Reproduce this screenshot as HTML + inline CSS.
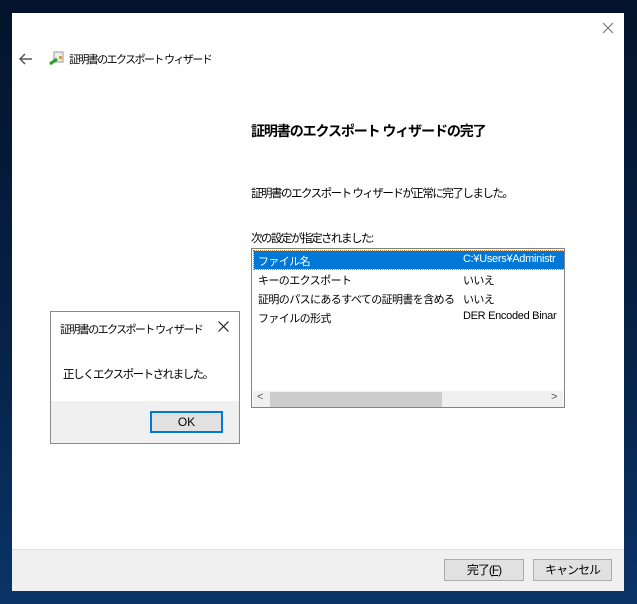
<!DOCTYPE html><html><head><meta charset="utf-8"><style>
body{margin:0;width:637px;height:604px;overflow:hidden;background:linear-gradient(180deg,#03132b 0%,#06234a 60%,#0a3468 100%);font-family:"Liberation Sans","Noto Sans CJK JP",sans-serif;font-size:11px;color:#000;position:relative}
.a{position:absolute;white-space:nowrap}
.t{letter-spacing:-1.5px}
.l{letter-spacing:-0.6px}
.win{left:12px;top:13px;width:612px;height:577px;background:#fff}
.foot{left:0;top:536px;width:612px;height:41px;background:#f0f0f0;border-top:1px solid #dfdfdf}
.btn{position:absolute;background:#e1e1e1;border:1px solid #adadad;text-align:center;line-height:20px;box-sizing:border-box;font-size:12px;letter-spacing:-1px}
</style></head><body>
<div class="a win">
<svg class="a" style="left:590px;top:9px" width="12" height="12"><path d="M1 1L11 11M11 1L1 11" stroke="#777" stroke-width="1.2"/></svg>
<svg class="a" style="left:7px;top:40px" width="14" height="12"><path d="M13 6H2M6 1L1 6L6 11" stroke="#555" stroke-width="1.5" fill="none"/></svg>
<svg class="a" style="left:36px;top:37px" width="16" height="16"><rect x="6" y="2" width="9" height="10" fill="#eee" stroke="#999"/><path d="M2 14L9 9" stroke="#2a9d2a" stroke-width="3"/><rect x="11" y="6" width="3" height="3" fill="#e8a000"/></svg>
<div class="a" style="left:57px;top:38px;font-size:11px;letter-spacing:-1.6px">証明書のエクスポート ウィザード</div>
<div class="a" style="left:239px;top:108px;font-size:14px;font-weight:bold;letter-spacing:-1.1px">証明書のエクスポート ウィザードの完了</div>
<div class="a t" style="left:239px;top:172px;font-size:11.5px">証明書のエクスポート ウィザードが正常に完了しました。</div>
<div class="a t" style="left:239px;top:217px;font-size:11.5px">次の設定が指定されました:</div>
<div class="a" style="left:239px;top:235px;width:314px;height:160px;border:1px solid #828282;box-sizing:border-box;overflow:hidden">
 <div class="a" style="left:2px;top:2px;width:310px;height:18px;background:#0078d7;outline:1px dotted #c08040"></div>
 <div class="a l" style="left:6px;top:4px;color:#fff">ファイル名</div><div class="a" style="left:211px;top:4px;color:#fff;letter-spacing:-0.3px">C:¥Users¥Administr</div>
 <div class="a l" style="left:6px;top:23px">キーのエクスポート</div><div class="a l" style="left:211px;top:23px">いいえ</div>
 <div class="a l" style="left:6px;top:42px">証明のパスにあるすべての証明書を含める</div><div class="a l" style="left:211px;top:42px">いいえ</div>
 <div class="a l" style="left:6px;top:61px">ファイルの形式</div><div class="a" style="left:211px;top:61px;letter-spacing:-0.3px">DER Encoded Binar</div>
 <div class="a" style="left:1px;top:142px;width:310px;height:16px;background:#f0f0f0"></div>
 <div class="a" style="left:18px;top:143px;width:172px;height:15px;background:#cdcdcd"></div>
 <div class="a" style="left:5px;top:142px;font-size:11px;color:#555">&lt;</div>
 <div class="a" style="left:299px;top:142px;font-size:11px;color:#555">&gt;</div>
</div>
<div class="a foot">
 <div class="btn" style="left:432px;top:9px;width:80px;height:22px">完了(<u>F</u>)</div>
 <div class="btn" style="left:521px;top:9px;width:79px;height:22px">キャンセル</div>
</div>
</div>
<div class="a" style="left:50px;top:311px;width:190px;height:133px;background:#fff;border:1px solid #8a8a8a;box-sizing:border-box">
 <div class="a" style="left:9px;top:9px;font-size:11px;letter-spacing:-1.6px">証明書のエクスポート ウィザード</div>
 <svg class="a" style="left:167px;top:9px" width="11" height="11"><path d="M0.5 0.5L10.5 10.5M10.5 0.5L0.5 10.5" stroke="#222" stroke-width="1.2"/></svg>
 <div class="a t" style="left:12px;top:54px;font-size:11.5px">正しくエクスポートされました。</div>
 <div class="a" style="left:0;top:89px;width:188px;height:42px;background:#f0f0f0"></div>
 <div class="btn" style="left:99px;top:99px;width:73px;height:22px;border:2px solid #0078d7;line-height:18px;letter-spacing:0">OK</div>
</div>
</body></html>
